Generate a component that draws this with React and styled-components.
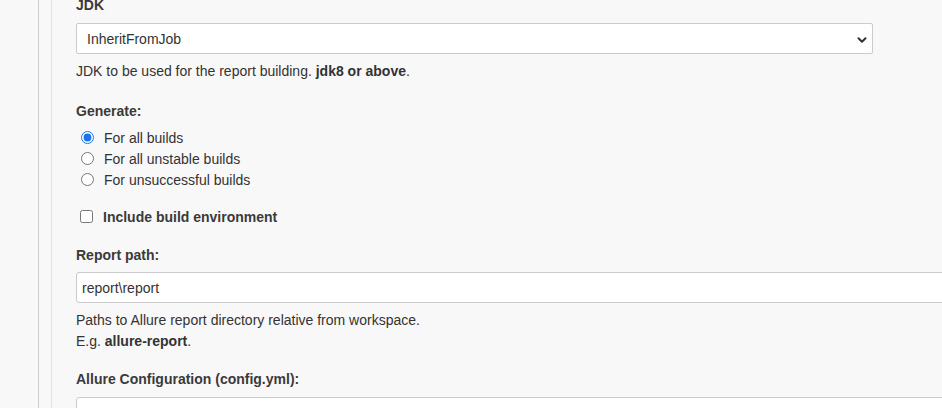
import React from 'react';
import styled, { createGlobalStyle } from 'styled-components';
import { ChevronDown } from 'lucide-react';

const GlobalStyle = createGlobalStyle`
  html, body {
    margin: 0;
    padding: 0;
    background: #f8f8f8;
    font-family: "Liberation Sans", Arial, sans-serif;
    color: #333;
    overflow: hidden;
  }
`;

const Page = styled.div`
  display: flex;
  height: 408px;
  overflow: hidden;
`;

const Gutter = styled.div`
  width: 38px;
  flex-shrink: 0;
  border-right: 1px solid #cdcdcd;
`;

const Section = styled.div`
  flex: 1;
  margin-left: 12px;
  border-left: 1px solid #e3e3e3;
  padding-left: 24px;
  min-width: 0;
`;

const Form = styled.div`
  margin-top: -5px;
  display: flex;
  flex-direction: column;
`;

const Label = styled.div`
  font-size: 14px;
  font-weight: 700;
  line-height: 20px;
  color: #3a3a3a;
  margin-top: ${(p) => p.$gap || 0}px;
`;

const SelectWrap = styled.div`
  position: relative;
  width: 797px;
  margin-top: 8px;
`;

const Select = styled.select`
  appearance: none;
  width: 100%;
  height: 31px;
  border: 1px solid #cbcbcb;
  border-radius: 2px;
  background: #fff;
  padding: 0 10px;
  font-family: inherit;
  font-size: 14px;
  color: #333;
  outline: none;
`;

const Chevron = styled(ChevronDown)`
  position: absolute;
  right: 4px;
  top: 10px;
  pointer-events: none;
  color: #333;
`;

const Help = styled.div`
  font-size: 14px;
  line-height: 21px;
  margin-top: ${(p) => p.$gap || 0}px;
  b {
    font-weight: 700;
  }
`;

const Options = styled.div`
  display: flex;
  flex-direction: column;
  margin-top: 6px;
  padding-left: 5px;
`;

const Option = styled.label`
  display: flex;
  align-items: center;
  height: 21px;
  font-size: 14px;
  gap: 10px;
  input {
    margin: 0;
    width: 13px;
    height: 13px;
    accent-color: #1a73e8;
  }
`;

const CheckRow = styled.label`
  display: flex;
  align-items: center;
  height: 21px;
  margin-top: 16px;
  padding-left: 4px;
  gap: 10px;
  font-size: 14px;
  font-weight: 700;
  color: #3a3a3a;
  input {
    margin: 0;
    width: 13px;
    height: 13px;
  }
`;

const TextInput = styled.input`
  box-sizing: border-box;
  width: calc(100% + 20px);
  height: 31px;
  margin-top: ${(p) => p.$gap || 7}px;
  border: 1px solid #cbcbcb;
  border-radius: 3px;
  background: #fff;
  padding: 0 5px;
  font-family: inherit;
  font-size: 14px;
  color: #333;
  outline: none;
`;

const App = () => (
  <>
    <GlobalStyle />
    <Page>
      <Gutter />
      <Section>
        <Form>
          <Label>JDK</Label>
          <SelectWrap>
            <Select defaultValue="InheritFromJob">
              <option>InheritFromJob</option>
            </Select>
            <Chevron size={14} strokeWidth={3.5} />
          </SelectWrap>
          <Help $gap={7}>
            JDK to be used for the report building. <b>jdk8 or above</b>.
          </Help>

          <Label $gap={19}>Generate:</Label>
          <Options>
            <Option>
              <input type="radio" name="gen" defaultChecked />
              For all builds
            </Option>
            <Option>
              <input type="radio" name="gen" />
              For all unstable builds
            </Option>
            <Option>
              <input type="radio" name="gen" />
              For unsuccessful builds
            </Option>
          </Options>
          <CheckRow>
            <input type="checkbox" />
            Include build environment
          </CheckRow>

          <Label $gap={18}>Report path:</Label>
          <TextInput $gap={7} defaultValue={'report\\report'} />
          <Help $gap={7}>
            Paths to Allure report directory relative from workspace.
            <br />
            E.g. <b>allure-report</b>.
          </Help>

          <Label $gap={17}>Allure Configuration (config.yml):</Label>
          <TextInput $gap={8} defaultValue="" />
        </Form>
      </Section>
    </Page>
  </>
);

export default App;
